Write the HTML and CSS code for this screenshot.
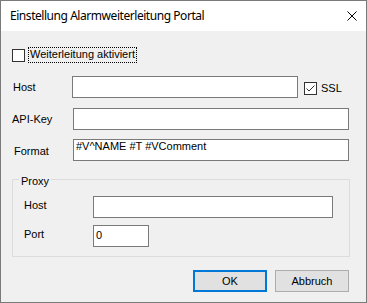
FILE: index.html
```html
<!DOCTYPE html>
<html lang="de">
<head>
<meta charset="utf-8">
<title>Einstellung Alarmweiterleitung Portal</title>
<link rel="stylesheet" href="styles.css">
</head>
<body>
<div class="window">
  <div class="titlebar">
    <span class="title">Einstellung Alarmweiterleitung Portal</span>
    <svg class="close" width="10" height="10" viewBox="0 0 10 10"><path d="M0.5 0.5 L9.5 9.5 M9.5 0.5 L0.5 9.5" stroke="#000" stroke-width="1" fill="none"/></svg>
  </div>
  <div class="client">
    <div class="row row-enable">
      <span class="checkbox"></span>
      <span class="focus-label">Weiterleitung aktiviert</span>
    </div>
    <div class="row row-host">
      <span class="label label-host">Host</span>
      <span class="textbox tb-host"></span>
      <span class="checkbox checked ssl-box"><svg width="11" height="11" viewBox="0 0 11 11"><path d="M1.5 5.5 L4 8 L9.5 2.5" stroke="#333" stroke-width="1" fill="none"/></svg></span>
      <span class="ssl-label">SSL</span>
    </div>
    <div class="row row-api">
      <span class="label label-api">API-Key</span>
      <span class="textbox tb-wide"></span>
    </div>
    <div class="row row-format">
      <span class="label label-format">Format</span>
      <span class="textbox tb-wide tb-text">#V^NAME #T #VComment</span>
    </div>
    <fieldset class="group">
      <legend class="group-title">Proxy</legend>
      <div class="row row-phost">
        <span class="label label-proxy">Host</span>
        <span class="textbox tb-phost"></span>
      </div>
      <div class="row row-port">
        <span class="label label-proxy">Port</span>
        <span class="textbox tb-port">0</span>
      </div>
    </fieldset>
    <div class="buttons">
      <span class="button default">OK</span>
      <span class="button">Abbruch</span>
    </div>
  </div>
</div>
</body>
</html>
```
FILE: styles.css
```css
* { box-sizing: border-box; }
html, body { margin: 0; padding: 0; }
body {
  width: 367px;
  height: 303px;
  overflow: hidden;
  font-family: "Liberation Sans", Arial, sans-serif;
  font-size: 11px;
  line-height: 13px;
  color: #000;
  background: #f0f0f0;
}
.window {
  width: 367px;
  height: 303px;
  border: 1px solid #7a7a7a;
  display: flex;
  flex-direction: column;
}
.titlebar {
  height: 30px;
  background: #fff;
  display: flex;
  align-items: center;
  padding-left: 9px;
  flex: none;
}
.title {
  font-family: "Noto Sans", "Open Sans", sans-serif;
  font-size: 12px;
  line-height: 30px;
  letter-spacing: -0.45px;
  flex: 1;
  color: #000;
}
.close {
  margin-right: 9px;
  display: block;
}
.client {
  flex: 1;
  background: #f0f0f0;
}
.row {
  display: flex;
  align-items: flex-start;
}
.checkbox {
  width: 13px;
  height: 13px;
  border: 1px solid #333;
  background: #fff;
  flex: none;
  display: flex;
  align-items: center;
  justify-content: center;
}
.row-enable {
  margin-top: 16px;
  height: 16px;
  align-items: center;
  padding-left: 11px;
}
.focus-label {
  margin-left: 3px;
  padding: 0 1px;
  height: 16px;
  border: 1px dotted #000;
  line-height: 13px;
  white-space: nowrap;
}
.label { flex: none; white-space: nowrap; }
.textbox {
  display: block;
  height: 22px;
  border: 1px solid #7a7a7a;
  background: #fff;
  flex: none;
  white-space: nowrap;
}
.row-host { margin-top: 13px; }
.label-host { width: 71px; padding-left: 12px; padding-top: 5px; }
.tb-host { width: 226px; }
.ssl-box { margin-left: 6px; margin-top: 6px; }
.ssl-label { margin-left: 4px; margin-top: 6px; }
.row-api { margin-top: 10px; }
.label-api { width: 72px; padding-left: 11px; padding-top: 5px; }
.tb-wide { width: 276px; }
.row-format { margin-top: 9px; }
.label-format { width: 72px; padding-left: 13px; padding-top: 6px; }
.tb-text { padding-left: 2px; padding-top: 0; }
.group {
  margin: 10px 0 0 11px;
  width: 338px;
  border: 1px solid #dcdcdc;
  padding: 0 0 9px 0;
  min-width: 0;
}
.group-title {
  margin-left: 6px;
  padding: 4px 2px 0 2px;
  line-height: 13px;
}
.row-phost { margin-top: 8px; }
.label-proxy { width: 80px; padding-left: 11px; padding-top: 3px; }
.tb-phost { width: 240px; }
.row-port { margin-top: 7px; }
.tb-port { width: 56px; padding-left: 2px; padding-top: 3px; }
.buttons {
  display: flex;
  justify-content: flex-end;
  gap: 8px;
  margin-top: 13px;
  padding-right: 17px;
}
.button {
  width: 74px;
  height: 22px;
  background: #e1e1e1;
  border: 1px solid #adadad;
  display: flex;
  align-items: center;
  justify-content: center;
}
.button.default {
  border: 2px solid #0078d7;
}
```
